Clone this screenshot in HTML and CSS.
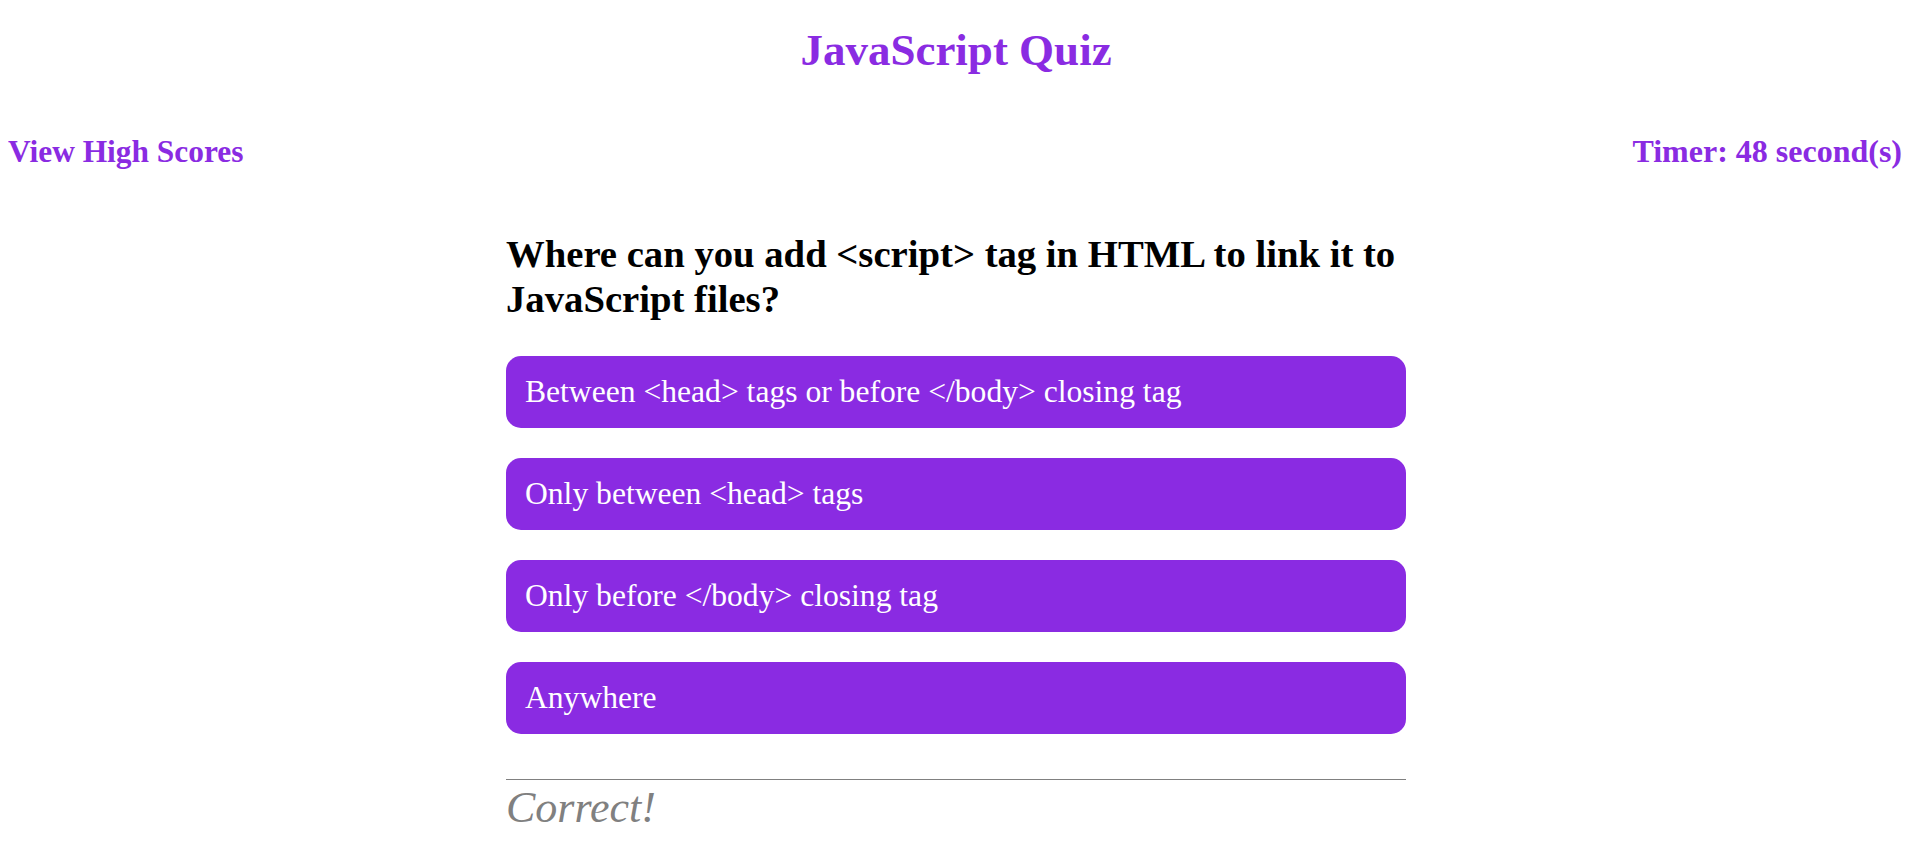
FILE: index.html
```html
<!DOCTYPE html>
<html lang="en">
<head>
<meta charset="utf-8">
<title>JavaScript Quiz</title>
<link rel="stylesheet" href="styles.css">
</head>
<body>
<header class="page-header">
  <h1 class="title">JavaScript Quiz</h1>
  <div class="topbar">
    <a class="highscores" href="#">View High Scores</a>
    <span class="timer">Timer: 48 second(s)</span>
  </div>
</header>
<main class="quiz">
  <h2 class="question">Where can you add &lt;script&gt; tag in HTML to link it to JavaScript files?</h2>
  <div class="answers">
    <button class="answer">Between &lt;head&gt; tags or before &lt;/body&gt; closing tag</button>
    <button class="answer">Only between &lt;head&gt; tags</button>
    <button class="answer">Only before &lt;/body&gt; closing tag</button>
    <button class="answer">Anywhere</button>
  </div>
  <div class="feedback">
    <p class="result">Correct!</p>
  </div>
</main>
</body>
</html>
```
FILE: styles.css
```css
html, body {
  background: #ffffff;
}
body {
  margin: 8px;
  font-family: "Liberation Serif", "Times New Roman", serif;
  color: #000;
}
.title {
  margin: 14px 0 0;
  text-align: center;
  font-size: 45px;
  line-height: 56px;
  font-weight: bold;
  color: #8a2be2;
}
.topbar {
  display: flex;
  justify-content: space-between;
  align-items: baseline;
  margin-top: 53px;
  padding-right: 2px;
}
.highscores, .timer {
  font-size: 32px;
  line-height: 40px;
  font-weight: bold;
  color: #8a2be2;
  text-decoration: none;
}
.highscores {
  font-size: 31.4px;
}
.quiz {
  width: 900px;
  margin: 60px auto 0;
}
.question {
  margin: 0;
  font-size: 38.7px;
  line-height: 45px;
  font-weight: bold;
}
.answers {
  display: flex;
  flex-direction: column;
  gap: 30px;
  margin-top: 34px;
}
.answer {
  display: block;
  width: 100%;
  box-sizing: border-box;
  height: 72px;
  padding: 18px 19px;
  border: none;
  border-radius: 15px;
  background: #8a2be2;
  color: #ffffff;
  font-family: inherit;
  font-size: 31.6px;
  line-height: 36px;
  text-align: left;
  cursor: pointer;
}
.feedback {
  margin-top: 45px;
  border-top: 1px solid #808080;
}
.result {
  margin: 1px 0 0;
  font-size: 44px;
  line-height: 54px;
  font-style: italic;
  color: #808080;
}
```
